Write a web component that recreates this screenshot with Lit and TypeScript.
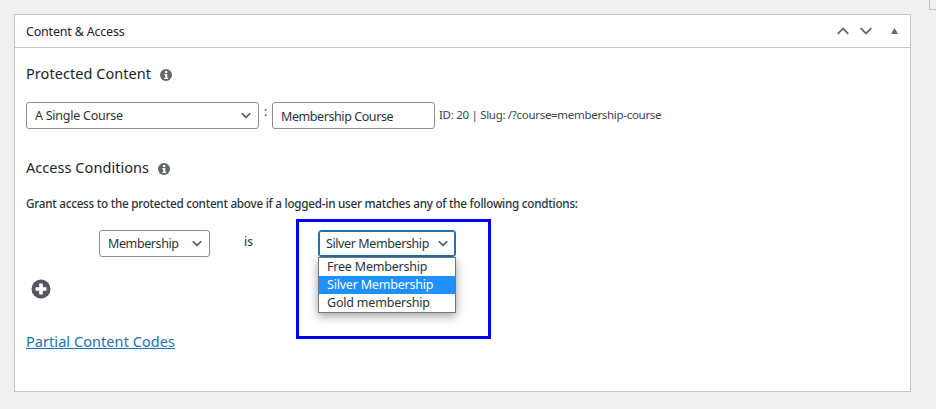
import { LitElement, html, css } from "lit";
import { customElement } from "lit/decorators.js";

const chevron = html`<svg class="chev" width="10" height="7" viewBox="0 0 10 7"><path d="M.8 1.2 L5 5.4 L9.2 1.2" fill="none" stroke="#50575e" stroke-width="1.6"/></svg>`;
const info = html`<svg class="info" width="12" height="12" viewBox="0 0 12 12"><circle cx="6" cy="6" r="6" fill="#646970"/><rect x="5" y="2" width="2.2" height="2" fill="#fff"/><path d="M4.3 5h3v3.9h.9v1H4.3v-1h.9V6h-.9z" fill="#fff"/></svg>`;

@customElement("app-root")
export class AppRoot extends LitElement {
  static styles = css`
    :host { display: block; width: 936px; height: 409px; background: #f0f0f1; position: relative; overflow: hidden;
      font-family: "Noto Sans", "Open Sans", sans-serif; color: #2c3338; box-sizing: border-box; padding: 14px 25px 0 14px; }
    * { box-sizing: border-box; }
    .corner { position: absolute; left: 929px; top: -1px; width: 20px; height: 11px; border: 1px solid #c3c4c7; background: #f0f0f1; }
    .panel { height: 378px; background: #fff; border: 1px solid #c3c4c7; }
    .head { height: 33px; border-bottom: 1px solid #c3c4c7; display: flex; align-items: center; padding: 0 12px 0 11px; }
    .title { font-size: 12.5px; font-weight: 400; color: #1d2327; letter-spacing: -0.2px; flex: 1; }
    .handles { display: flex; align-items: center; gap: 11px; margin-top: 0; }
    .handles .tri { margin-left: 8px; }
    .body { padding: 15px 11px 0; }
    h3 { margin: 0; font-size: 14.5px; font-weight: 400; color: #1d2327; line-height: 20px; display: flex; align-items: center; gap: 9px; letter-spacing: 0.05px; }
    .info { margin-top: 3px; }
    .row1 { display: flex; align-items: flex-start; margin-top: 19px; }
    .sel { height: 27px; border: 1px solid #8c8f94; border-radius: 3px; background: #fff; display: flex; align-items: center; justify-content: space-between; font-size: 12.5px; letter-spacing: -0.4px; color: #2c3338; }
    .s1 { width: 233px; padding: 0 7px 0 8px; letter-spacing: -0.25px; }
    .colon { width: 13px; text-align: center; font-size: 12px; line-height: 20px; }
    .inp { width: 163px; height: 27px; border: 1px solid #8c8f94; border-radius: 3px; display: flex; align-items: center; padding: 1px 8px 0; font-size: 12.5px; letter-spacing: -0.42px; }
    .meta { margin-left: 4px; font-size: 11.5px; letter-spacing: -0.3px; line-height: 26px; color: #3c434a; }
    .ac { margin-top: 28px; }
    .grant { margin: 17px 0 0; font-size: 11.7px; font-weight: 500; line-height: 18px; letter-spacing: -0.25px; color: #2c3338; }
    .row2 { display: flex; align-items: flex-start; margin-top: 18px; height: 27px; position: relative; }
    .s2 { width: 111px; margin-left: 73px; padding: 0 7px 0 8px; }
    .is { margin-left: 34px; width: 74px; font-size: 12px; font-weight: 500; line-height: 24px; color: #3c434a; }
    .s3 { width: 138px; padding: 0 7px 0 7px; border-color: #2271b1; box-shadow: 0 0 0 1px #2271b1 inset; color: #2c3338; position: relative; }
    .menu { position: absolute; left: 292px; top: 27px; width: 138px; border: 1px solid #767676; background: #fff; box-shadow: 0 3px 9px rgba(0,0,0,.38); font-size: 12.5px; letter-spacing: -0.2px; color: #2c3338; }
    .opt { height: 18px; line-height: 18px; padding: 0 7px 0 8px; white-space: nowrap; }
    .opt.on { background: #1e90ff; color: #fff; }
    .plus { display: block; margin: 22px 0 0 5px; }
    .link { display: inline-block; margin-top: 32px; font-size: 14.5px; font-weight: 400; line-height: 20px; color: #2271b1; text-decoration: underline; letter-spacing: 0.06px; }
    .mark { position: absolute; left: 296px; top: 219px; width: 195px; height: 120px; border: 3px solid #0000f0; pointer-events: none; }
  `;
  render() {
    return html`
      <div class="corner"></div>
      <div class="panel">
        <div class="head">
          <div class="title">Content &amp; Access</div>
          <div class="handles">
            <svg width="12" height="8" viewBox="0 0 12 8"><path d="M.7 6.8 L6 1.5 L11.3 6.8" fill="none" stroke="#646970" stroke-width="1.8"/></svg>
            <svg width="12" height="8" viewBox="0 0 12 8"><path d="M.7 1.2 L6 6.5 L11.3 1.2" fill="none" stroke="#646970" stroke-width="1.8"/></svg>
            <svg class="tri" width="7" height="6" viewBox="0 0 7 6"><path d="M3.5 0 L7 6 H0 Z" fill="#646970"/></svg>
          </div>
        </div>
        <div class="body">
          <h3>Protected Content ${info}</h3>
          <div class="row1">
            <div class="sel s1"><span>A Single Course</span>${chevron}</div>
            <div class="colon">:</div>
            <div class="inp">Membership Course</div>
            <div class="meta">ID: 20 | Slug: /?course=membership-course</div>
          </div>
          <h3 class="ac">Access Conditions ${info}</h3>
          <p class="grant">Grant access to the protected content above if a logged-in user matches any of the following condtions:</p>
          <div class="row2">
            <div class="sel s2"><span>Membership</span>${chevron}</div>
            <div class="is">is</div>
            <div class="sel s3"><span>Silver Membership</span>${chevron}</div>
            <div class="menu">
              <div class="opt">Free Membership</div>
              <div class="opt on">Silver Membership</div>
              <div class="opt">Gold membership</div>
            </div>
          </div>
          <svg class="plus" width="20" height="20" viewBox="0 0 20 20"><circle cx="10" cy="10" r="9.5" fill="#50575e"/><path d="M8.2 4.5h3.6v3.7h3.7v3.6h-3.7v3.7H8.2v-3.7H4.5V8.2h3.7z" fill="#fff"/></svg>
          <a class="link">Partial Content Codes</a>
        </div>
      </div>
      <div class="mark"></div>
    `;
  }
}
